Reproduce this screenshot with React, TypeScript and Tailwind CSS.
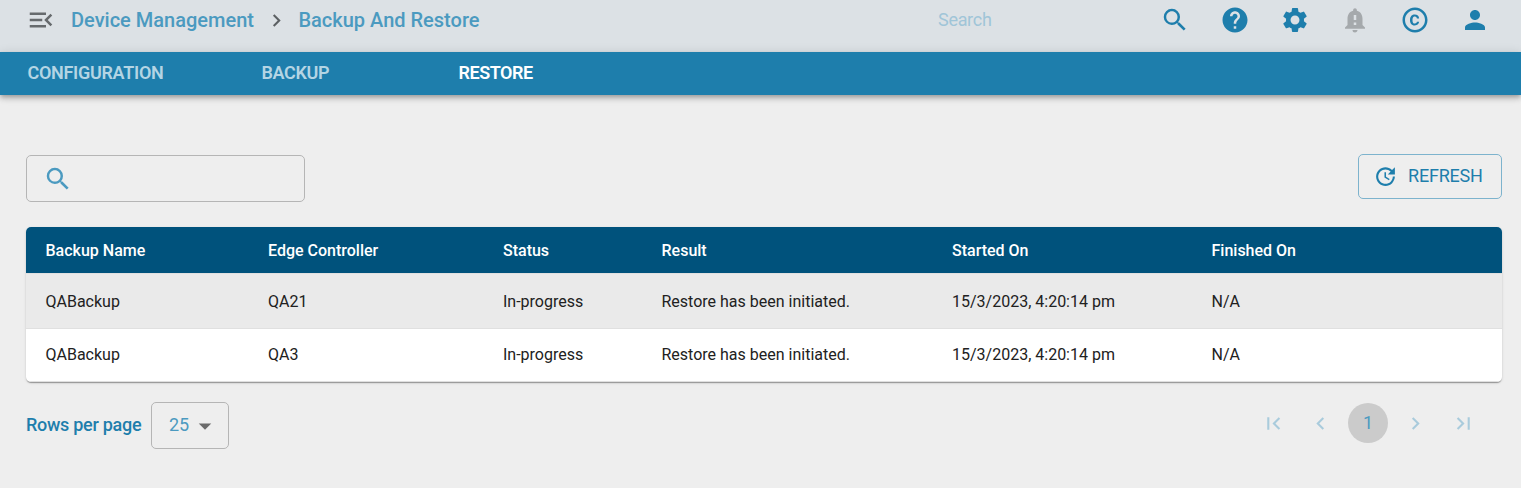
import {
  MdMenuOpen, MdNavigateNext, MdNavigateBefore, MdSearch, MdHelp, MdSettings,
  MdNotificationImportant, MdCopyright, MdPerson, MdUpdate, MdArrowDropDown,
  MdFirstPage, MdLastPage,
} from "react-icons/md";

const columns = ["Backup Name", "Edge Controller", "Status", "Result", "Started On", "Finished On"];

const rows = [
  ["QABackup", "QA21", "In-progress", "Restore has been initiated.", "15/3/2023, 4:20:14 pm", "N/A"],
  ["QABackup", "QA3", "In-progress", "Restore has been initiated.", "15/3/2023, 4:20:14 pm", "N/A"],
];

const rowGrid = "grid grid-cols-[222.5px_235px_158.5px_290.5px_259.5px_1fr] items-center pl-[19.5px]";

function Header() {
  return (
    <header className="flex h-[52px] items-start bg-[#dce1e5] pt-[5px]">
      <nav className="flex h-[30px] flex-1 items-center pl-[26px] text-[20px] font-medium text-[#4b9ac0]">
        <MdMenuOpen size={30} className="text-[#666a6d]" />
        <span className="ml-[15px]">Device Management</span>
        <MdNavigateNext size={25} className="mx-[10px] text-[#5c6063]" />
        <span className="-ml-[0.5px]">Backup And Restore</span>
      </nav>
      <span className="flex h-[30px] w-[222px] items-center pb-0.5 text-[18px] tracking-[-0.3px] text-[#a0c5d8]">Search</span>
      <div className="flex gap-[30px] pr-[31px] text-[#1e7eac]">
        <MdSearch size={30} />
        <MdHelp size={30} />
        <MdSettings size={30} />
        <MdNotificationImportant size={30} className="text-[#a5a9ac]" />
        <MdCopyright size={30} />
        <MdPerson size={30} />
      </div>
    </header>
  );
}

function Tabs() {
  return (
    <div className="flex h-[43px] items-center bg-[#1e7eac] pb-0.5 pl-[27.5px] text-[18px] font-semibold text-[#b4d5e4] shadow-[0_2px_4px_-1px_rgba(0,0,0,0.2),0_4px_5px_0_rgba(0,0,0,0.14),0_1px_10px_0_rgba(0,0,0,0.12)]">
      <span className="w-[234px] tracking-[-0.3px]">CONFIGURATION</span>
      <span className="w-[197px] tracking-[-0.35px]">BACKUP</span>
      <span className="tracking-[-0.45px] text-white">RESTORE</span>
    </div>
  );
}

function Table() {
  return (
    <div className="mt-[25px] h-[155px] overflow-hidden rounded-[5px] bg-white text-[16px] text-[#212121] shadow-[0_2px_1px_-1px_rgba(0,0,0,0.2),0_1px_1px_0_rgba(0,0,0,0.14),0_1px_3px_0_rgba(0,0,0,0.12)]">
      <div className={`${rowGrid} h-[46px] bg-[#00527c] pt-0.5 font-medium text-white`}>
        {columns.map((c) => <span key={c}>{c}</span>)}
      </div>
      <div className={`${rowGrid} h-[56px] border-y border-[#e0e0e0] bg-[#eaeaea] pt-px`}>
        {rows[0].map((c, i) => <span key={i}>{c}</span>)}
      </div>
      <div className={`${rowGrid} h-[53px] border-b border-[#e0e0e0]`}>
        {rows[1].map((c, i) => <span key={i}>{c}</span>)}
      </div>
    </div>
  );
}

function Footer() {
  return (
    <div className="mt-5 flex items-start justify-between">
      <div className="flex items-center text-[18px] text-[#1e7eac]">
        <span className="w-[125px] pb-0.5 font-medium tracking-[-0.28px]">Rows per page</span>
        <div className="flex h-[47px] w-[78px] items-center rounded-[5px] border border-[#b5b5b5] pl-[17px] text-[#4b9ac0]">
          <span className="pb-0.5">25</span>
          <MdArrowDropDown size={30} className="ml-[1px] text-[#6b6b6b]" />
        </div>
      </div>
      <div className="mt-px flex h-10 items-center pr-[26px] text-[#a9cbdc]">
        <MdFirstPage size={25} />
        <MdNavigateBefore size={25} className="ml-[22px]" />
        <span className="mr-4 ml-[15px] flex size-10 items-center justify-center rounded-full bg-[#cbcbcb] pb-0.5 text-[18px] text-[#4b9ac0]">1</span>
        <MdNavigateNext size={25} className="-ml-px" />
        <MdLastPage size={25} className="ml-[23px]" />
      </div>
    </div>
  );
}

export default function App() {
  return (
    <div className="h-[488px] overflow-hidden bg-[#eeeeee] font-['Roboto',sans-serif]">
      <Header />
      <Tabs />
      <main className="pr-[19px] pl-[26px] pt-[59px]">
        <div className="flex h-12 items-start justify-between">
          <div className="mt-px flex h-[47px] w-[279px] items-center rounded-[5px] border border-[#b5b5b5] pl-[16px] text-[#4b9ac0]">
            <MdSearch size={30} />
          </div>
          <button className="flex h-[45px] w-36 items-center rounded-[5px] border border-[#7db3cd] pl-[14px] text-[18px] text-[#1e7eac]">
            <MdUpdate size={25} />
            <span className="ml-[10px] pb-0.5 tracking-[-0.2px]">REFRESH</span>
          </button>
        </div>
        <Table />
        <Footer />
      </main>
    </div>
  );
}
